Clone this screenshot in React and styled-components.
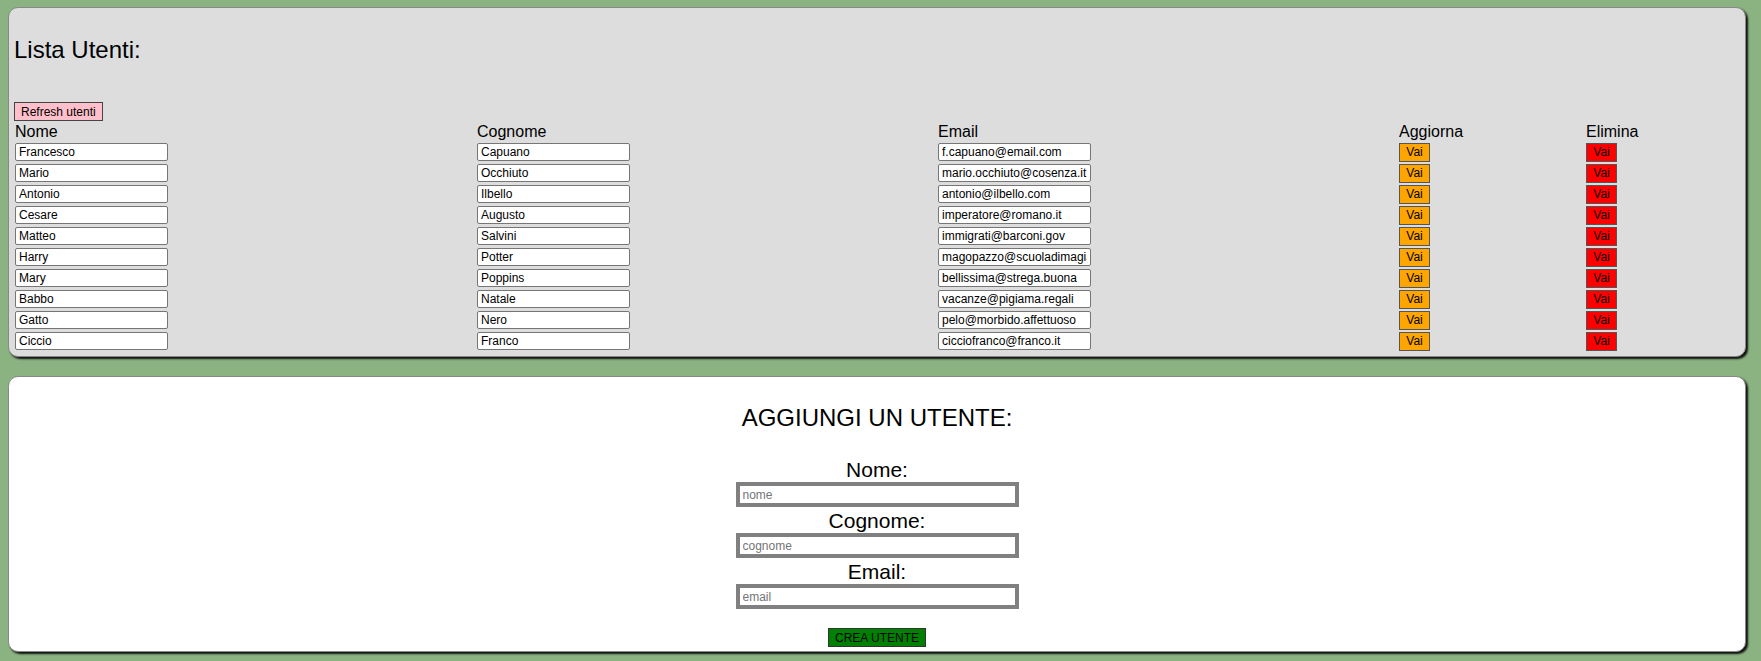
import React from "react";
import styled, { createGlobalStyle, css } from "styled-components";

const GlobalStyle = createGlobalStyle`
  html, body {
    margin: 0;
    padding: 0;
    background-color: #8bb381;
    font-family: "Liberation Sans", Arial, sans-serif;
  }
`;

const Page = styled.div`
  display: flex;
  flex-direction: column;
  gap: 19px;
  padding: 7px 15px 9px 8px;
`;

const Card = styled.div`
  background-color: ${({ white }) => (white ? "#ffffff" : "#dddddd")};
  border: 1px solid #888888;
  border-radius: 10px;
  box-shadow: 2px 2px 2px #111111;
  ${({ white }) =>
    white
      ? css`
          display: flex;
          flex-direction: column;
          align-items: center;
          padding: 27px 5px 4px;
        `
      : css`
          padding: 0 5px 4px;
        `}
`;

const Title = styled.h2`
  margin: ${({ centered }) => (centered ? "0 0 25px" : "28px 0 38px")};
  font-size: 24px;
  font-weight: normal;
  line-height: 28px;
  color: #000;
`;

const PinkButton = styled.button`
  display: block;
  height: 19px;
  padding: 0 6px;
  border: 1px solid #444;
  background-color: pink;
  font-family: "Liberation Sans", Arial, sans-serif;
  font-size: 12px;
  color: #000;
`;

const Grid = styled.div`
  display: grid;
  grid-template-columns: 462px 461px 461px 187px 1fr;
  margin-left: 1px;
`;

const HeadCell = styled.div`
  height: 21px;
  padding-top: 2px;
  box-sizing: border-box;
  font-size: 16px;
  line-height: 18px;
  color: #000;
`;

const Cell = styled.div`
  height: 21px;
`;

const RowInput = styled.input`
  box-sizing: border-box;
  width: 153px;
  height: 18px;
  padding: 0 3px;
  border: 1px solid #767676;
  border-radius: 2px;
  background: #fff;
  font-family: "Liberation Sans", Arial, sans-serif;
  font-size: 12px;
  color: #000;
  outline: none;
`;

const GoButton = styled.button`
  box-sizing: border-box;
  width: 31px;
  height: 19px;
  padding: 0;
  border: 1px solid #555;
  background-color: ${({ danger }) => (danger ? "#ff0000" : "#ffa500")};
  font-family: "Liberation Sans", Arial, sans-serif;
  font-size: 12px;
  color: #000;
`;

const Label = styled.label`
  font-size: 21px;
  line-height: 25px;
  color: #000;
`;

const FormInput = styled.input`
  box-sizing: border-box;
  width: 283px;
  height: 25px;
  margin-bottom: 1px;
  padding: 0 3px;
  border: 4px solid #808080;
  background: #fff;
  font-family: "Liberation Sans", Arial, sans-serif;
  font-size: 12px;
  outline: none;
  &::placeholder {
    color: #757575;
  }
`;

const CreateButton = styled.button`
  box-sizing: border-box;
  width: 98px;
  height: 19px;
  margin-top: 18px;
  padding: 0;
  border: 1px solid #333;
  background-color: #008000;
  font-family: "Liberation Sans", Arial, sans-serif;
  font-size: 12px;
  color: #000;
`;

const users = [
  ["Francesco", "Capuano", "f.capuano@email.com"],
  ["Mario", "Occhiuto", "mario.occhiuto@cosenza.it"],
  ["Antonio", "Ilbello", "antonio@ilbello.com"],
  ["Cesare", "Augusto", "imperatore@romano.it"],
  ["Matteo", "Salvini", "immigrati@barconi.gov"],
  ["Harry", "Potter", "magopazzo@scuoladimagia.com"],
  ["Mary", "Poppins", "bellissima@strega.buona"],
  ["Babbo", "Natale", "vacanze@pigiama.regali"],
  ["Gatto", "Nero", "pelo@morbido.affettuoso"],
  ["Ciccio", "Franco", "cicciofranco@franco.it"],
];

const headers = ["Nome", "Cognome", "Email", "Aggiorna", "Elimina"];

export default function App() {
  return (
    <>
      <GlobalStyle />
      <Page>
        <Card>
          <Title>Lista Utenti:</Title>
          <PinkButton>Refresh utenti</PinkButton>
          <Grid>
            {headers.map(h => (
              <HeadCell key={h}>{h}</HeadCell>
            ))}
            {users.map(([nome, cognome, email]) => (
              <React.Fragment key={email}>
                <Cell>
                  <RowInput defaultValue={nome} />
                </Cell>
                <Cell>
                  <RowInput defaultValue={cognome} />
                </Cell>
                <Cell>
                  <RowInput defaultValue={email} />
                </Cell>
                <Cell>
                  <GoButton>Vai</GoButton>
                </Cell>
                <Cell>
                  <GoButton danger>Vai</GoButton>
                </Cell>
              </React.Fragment>
            ))}
          </Grid>
        </Card>
        <Card white>
          <Title centered>AGGIUNGI UN UTENTE:</Title>
          <Label>Nome:</Label>
          <FormInput placeholder="nome" />
          <Label>Cognome:</Label>
          <FormInput placeholder="cognome" />
          <Label>Email:</Label>
          <FormInput placeholder="email" />
          <CreateButton>CREA UTENTE</CreateButton>
        </Card>
      </Page>
    </>
  );
}
